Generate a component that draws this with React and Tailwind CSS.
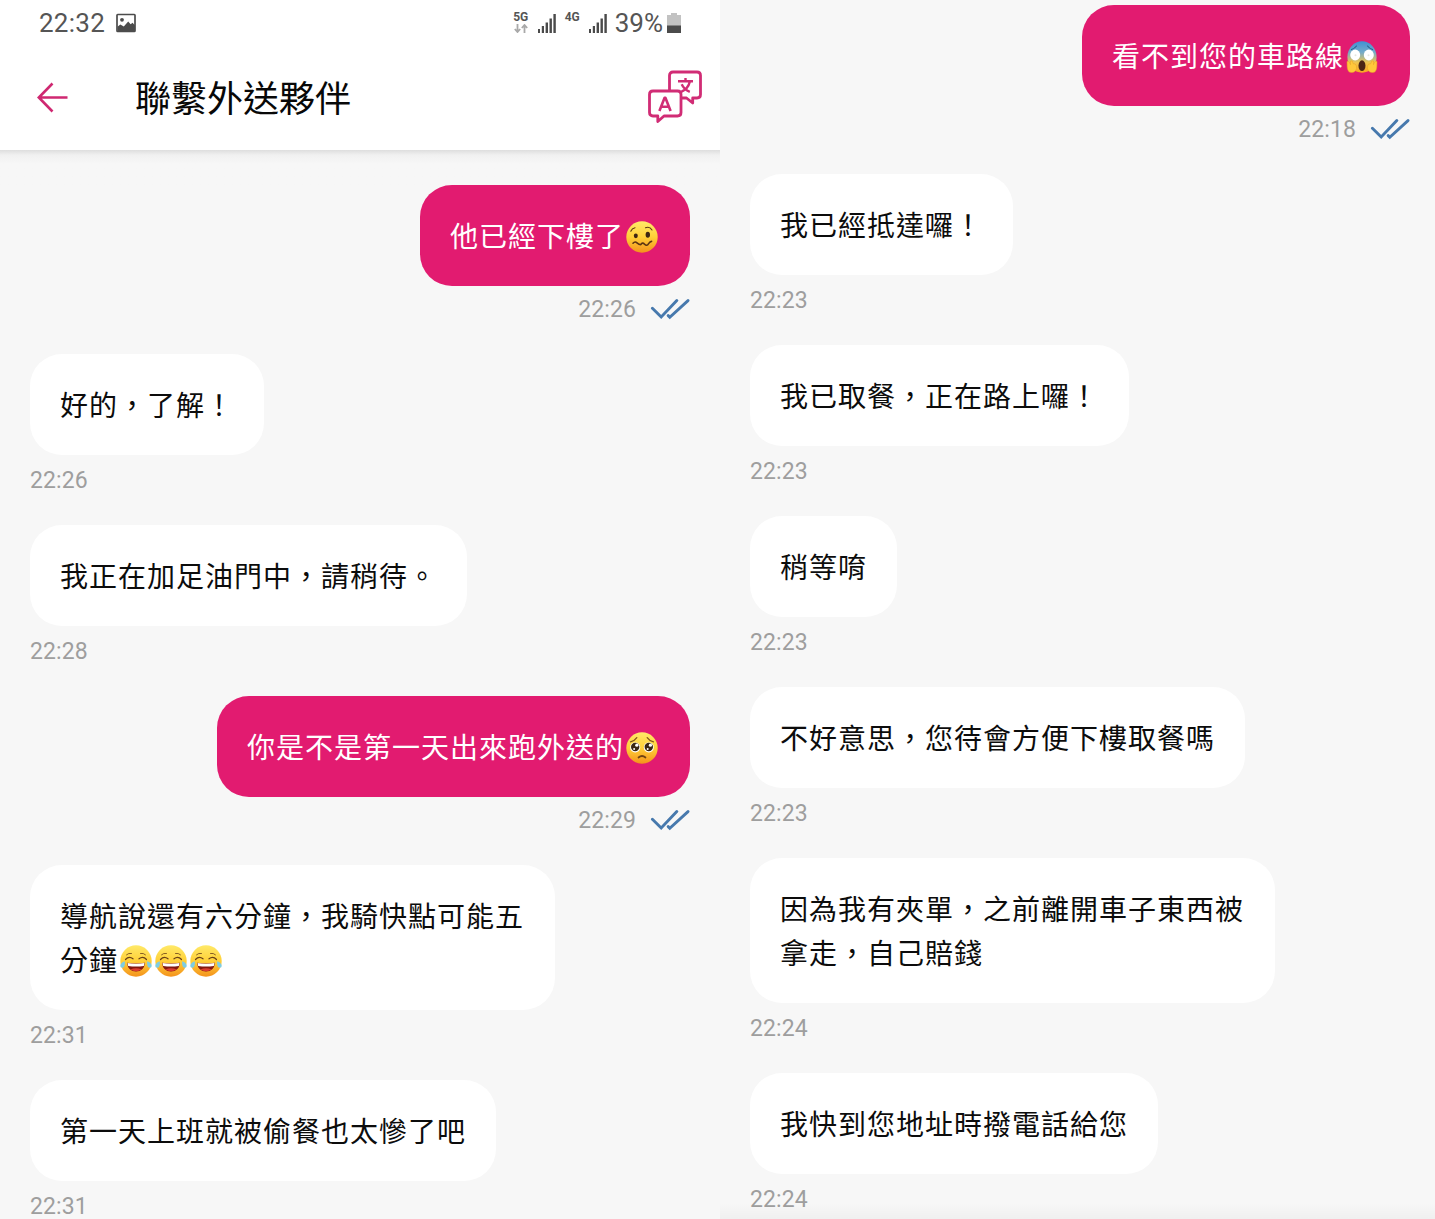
import React from "react";

const CJK = "font-['Roboto','Noto_Sans_CJK_TC',sans-serif]";

function Face({ label, children }) {
  return (
    <svg viewBox="0 0 32 32" role="img" aria-label={label} className="mx-[1.5px] inline-block h-8 w-8 shrink-0">
      <defs>
        <linearGradient id="face" x1="0" y1="0" x2="0" y2="1">
          <stop offset="0" stopColor="#ffe968" />
          <stop offset="0.5" stopColor="#ffd038" />
          <stop offset="1" stopColor="#f4921c" />
        </linearGradient>
        <linearGradient id="fear" x1="0" y1="0" x2="0" y2="1">
          <stop offset="0" stopColor="#3f91d4" />
          <stop offset="0.35" stopColor="#74abc9" />
          <stop offset="0.68" stopColor="#f1c64f" />
          <stop offset="1" stopColor="#f9a51e" />
        </linearGradient>
      </defs>
      {children}
    </svg>
  );
}

function Woozy() {
  return (
    <Face label="🥴">
      <circle cx="16" cy="16" r="15.7" fill="url(#face)" />
      <g fill="none" stroke="#5b3413" strokeLinecap="round" strokeLinejoin="round">
        <path d="M4.8 10.2Q6 7.2 9 6.7M19.5 6.8Q23.5 5 26 9" strokeWidth="1.1" />
        <path d="M7 22.2Q9 20 11 21.8T14.8 23.6Q16.4 20.8 18.6 23.2T22.6 22.6Q24 20.5 25.6 20.4" strokeWidth="1.6" />
      </g>
      <ellipse cx="9.8" cy="14.8" rx="2" ry="2.4" fill="#3d2612" />
      <ellipse cx="21.8" cy="13.8" rx="2.2" ry="3" fill="#3d2612" />
    </Face>
  );
}

function Pleading() {
  return (
    <Face label="🥺">
      <circle cx="16" cy="16" r="15.7" fill="url(#face)" />
      <path d="M4.5 9.8Q8.5 9 10.8 5.6M27.5 9.8Q23.5 9 21.2 5.6" fill="none" stroke="#81521a" strokeWidth="1.2" strokeLinecap="round" />
      <g fill="#fff"><circle cx="9.2" cy="15.4" r="5" /><circle cx="22.8" cy="15.4" r="5" /></g>
      <g fill="#392713"><circle cx="9.2" cy="15" r="4.2" /><circle cx="22.8" cy="15" r="4.2" /></g>
      <g fill="#fff"><circle cx="10.8" cy="13.2" r="1.6" /><circle cx="24.4" cy="13.2" r="1.6" /><circle cx="8.1" cy="17.1" r="1" /><circle cx="21.7" cy="17.1" r="1" /></g>
      <path d="M12.5 25.5Q16 22.5 19.5 25.5" fill="none" stroke="#704213" strokeWidth="1.7" strokeLinecap="round" />
    </Face>
  );
}

function Joy() {
  return (
    <Face label="😂">
      <circle cx="16" cy="16" r="15.7" fill="url(#face)" />
      <g fill="none" stroke="#694018" strokeWidth="1.2" strokeLinecap="round">
        <path d="M6.5 9.8Q8.5 7.8 11.5 8.4M20.5 8.4Q23.5 7.8 25.5 9.8" strokeWidth="0.8" />
        <path d="M5.5 14.5Q9 10.5 13 13.8M19 13.8Q23 10.5 26.5 14.5" />
      </g>
      <path d="M7 17.8Q16 19.2 25 17.8Q24 26.5 16 26.5Q8 26.5 7 17.8Z" fill="#83180f" />
      <path d="M7.5 18.1Q16 19.5 24.5 18.1L23.8 20.9Q16 22 8.2 20.9Z" fill="#fff" />
      <path d="M10.4 24.6Q16 21.8 21.6 24.6Q16 28 10.4 24.6Z" fill="#dc3c30" />
      <g fill="#7dcde4"><path d="M4.8 16.2Q5.4 22.8 2.2 22.8Q-.8 22 .9 19Q2.2 17 4.8 16.2Z" /><path d="M27.2 16.2Q26.6 22.8 29.8 22.8Q32.8 22 31.1 19Q29.8 17 27.2 16.2Z" /></g>
    </Face>
  );
}

function Scream() {
  return (
    <Face label="😱">
      <ellipse cx="16" cy="16" rx="14.6" ry="15.7" fill="url(#fear)" />
      <path d="M5.5 8.5Q8.5 7.5 10.5 5M26.5 8.5Q23.5 7.5 21.5 5" stroke="#25608f" strokeWidth="1.1" fill="none" strokeLinecap="round" />
      <g fill="#fff"><ellipse cx="9.2" cy="14" rx="5" ry="5.4" /><ellipse cx="22.8" cy="14" rx="5" ry="5.4" /></g>
      <g fill="#e5e6e0"><circle cx="9.5" cy="14.3" r="1" /><circle cx="22.5" cy="14.3" r="1" /></g>
      <ellipse cx="16" cy="24.7" rx="3.5" ry="5.4" fill="#4c2615" />
      <g fill="#ffc83b" stroke="#e9a127" strokeWidth="0.5" strokeLinejoin="round">
        <path d="M1 20.5Q2.5 19.3 3.8 22L4.5 23.7V20Q6.5 18.5 7.3 22.8L9.2 23Q11 24.5 10.5 27.5Q9.5 31.6 5.5 31.5Q1.5 31.5 1.2 26Z" />
        <path d="M31 20.5Q29.5 19.3 28.2 22L27.5 23.7V20Q25.5 18.5 24.7 22.8L22.8 23Q21 24.5 21.5 27.5Q22.5 31.6 26.5 31.5Q30.5 31.5 30.8 26Z" />
      </g>
    </Face>
  );
}

function Checks() {
  return (
    <svg viewBox="0 0 40 22" className="h-[22px] w-10" fill="none" stroke="#4779ad" strokeWidth="2.9" aria-hidden="true">
      <path d="M2.4 10.2L11.2 19L26.8 2.6M18.2 17.6L19.8 19.2L38 2.6" strokeLinecap="round" />
    </svg>
  );
}

function Message({ sent, time, width, lines, emoji }) {
  return (
    <article className={sent ? "flex flex-col items-end" : "flex flex-col items-start"}>
      <div
        className={`${width} rounded-[32px] px-[30px] pt-[30px] pb-[27px] text-[28px] leading-[44px] tracking-[1px] whitespace-nowrap ${
          sent ? "bg-[#e21b70] text-white" : "bg-white text-[#0c0c0c]"
        }`}
      >
        {lines.map((line, i) => (
          <p key={line} className="flex h-11 items-center">
            <span className="pt-0.5">{line}</span>
            {i === lines.length - 1 && emoji}
          </p>
        ))}
      </div>
      <div className={`flex items-center text-[23px] leading-7 tracking-[0.1px] text-[#9e9e9e] ${sent ? "h-[68px] gap-3.5 pb-[22px]" : "h-[70px] pb-[18px]"}`}>
        <time className={sent ? "pt-0.5" : ""}>{time}</time>
        {sent && <Checks />}
      </div>
    </article>
  );
}

function Signal() {
  return (
    <svg viewBox="0 0 18 20" className="h-5 w-[18px]" fill="#4a4a4a" aria-hidden="true">
      <rect x="0" y="16" width="2" height="4" /><rect x="3.8" y="13" width="2.2" height="7" /><rect x="7.6" y="9.5" width="2.4" height="10.5" /><rect x="11.5" y="5.5" width="2.4" height="14.5" /><rect x="15.4" y="1" width="2.4" height="19" />
    </svg>
  );
}

function StatusBar() {
  return (
    <div className="flex h-[46px] items-center justify-between pr-[39px] pl-[39px] text-[#555555]">
      <div className="flex items-center gap-[11px]">
        <span className="text-[26px] leading-8 tracking-[0.25px]">22:32</span>
        <svg viewBox="0 0 20 20" className="h-5 w-5" aria-label="圖片">
          <rect x="1" y="1.5" width="18" height="17" rx="0.7" fill="white" stroke="#4c4c4c" strokeWidth="1.7" />
          <circle cx="6" cy="6.8" r="1.9" fill="#4c4c4c" />
          <path d="M1.5 13.8L4.3 11.5L7.8 13.5L12.2 8.6L14.6 11.2L16.6 9.8L19 12.5V18.5H1.5Z" fill="#4c4c4c" />
        </svg>
      </div>
      <div className="flex items-center">
        <div className="flex w-4 flex-col items-center gap-px pb-0.5">
          <span className="text-[12px] leading-[11px] font-bold">5G</span>
          <svg viewBox="0 0 14 9" className="h-[9px] w-3.5" fill="none" stroke="#a9a9a9" strokeWidth="1.8"><path d="M3.5 0V8M.8 5L3.5 8L6.2 5M10.5 9V1M7.8 4L10.5 1L13.2 4" /></svg>
        </div>
        <div className="ml-[9px] pb-px"><Signal /></div>
        <span className="mb-3 ml-[9px] w-4 text-[12px] leading-[11px] font-bold">4G</span>
        <div className="ml-2 pb-px"><Signal /></div>
        <span className="ml-2 text-[26px] leading-8">39%</span>
        <svg viewBox="0 0 14 20" className="ml-1 h-5 w-3.5" aria-hidden="true">
          <path d="M4 0H10V2H14V13H0V2H4Z" fill="#c2c2c2" /><path d="M0 12.5H14V20H0Z" fill="#4b4b4b" />
        </svg>
      </div>
    </div>
  );
}

function TranslateIcon() {
  return (
    <svg viewBox="0 0 54 54" className="mb-0.5 h-[54px] w-[54px]" fill="none" stroke="#d12c75" strokeWidth="2.8" strokeLinejoin="round" aria-label="翻譯">
      <path d="M21.5 20V5.5Q21.5 2 25 2H49Q52.5 2 52.5 5.5V24.5Q52.5 28 49 28H44.7V33L38.5 28H33" />
      <path d="M5 21H29.5Q33 21 33 24.5V42.5Q33 46 29.5 46H16L9.8 51.5V46H5Q1.5 46 1.5 42.5V24.5Q1.5 21 5 21Z" />
      <path d="M11.4 41L16.6 27.8H17.4L22.6 41M13.2 36.8H20.8" strokeWidth="2.6" />
      <path d="M30 11.2H45M37.5 8V11M41.8 11.8Q40.2 18.8 33.2 21.8M33.7 14.2Q36.2 19.7 41.8 21.8" strokeWidth="2.4" />
    </svg>
  );
}

const leftMessages = [
  { sent: true, time: "22:26", width: "w-[270px]", lines: ["他已經下樓了"], emoji: <Woozy /> },
  { time: "22:26", width: "w-[234px]", lines: ["好的，了解！"] },
  { time: "22:28", width: "w-[437px]", lines: ["我正在加足油門中，請稍待。"] },
  { sent: true, time: "22:29", width: "w-[473px]", lines: ["你是不是第一天出來跑外送的"], emoji: <Pleading /> },
  { time: "22:31", width: "w-[525px]", lines: ["導航說還有六分鐘，我騎快點可能五", "分鐘"], emoji: <><Joy /><Joy /><Joy /></> },
  { time: "22:31", width: "w-[466px]", lines: ["第一天上班就被偷餐也太慘了吧"] },
];

const rightMessages = [
  { sent: true, time: "22:18", width: "w-[328px]", lines: ["看不到您的車路線"], emoji: <Scream /> },
  { time: "22:23", width: "w-[263px]", lines: ["我已經抵達囉！"] },
  { time: "22:23", width: "w-[379px]", lines: ["我已取餐，正在路上囉！"] },
  { time: "22:23", width: "w-[147px]", lines: ["稍等唷"] },
  { time: "22:23", width: "w-[495px]", lines: ["不好意思，您待會方便下樓取餐嗎"] },
  { time: "22:24", width: "w-[525px]", lines: ["因為我有夾單，之前離開車子東西被", "拿走，自己賠錢"] },
  { time: "22:24", width: "w-[408px]", lines: ["我快到您地址時撥電話給您"] },
];

export default function App() {
  return (
    <main lang="zh-Hant" className={`${CJK} flex h-[1219px] w-[1435px] overflow-hidden bg-[#f7f7f7]`}>
      <section className="flex w-[720px] shrink-0 flex-col">
        <header className="h-[150px] shrink-0 bg-white">
          <StatusBar />
          <div className="flex h-[104px] items-center pr-[18px] pl-[37px]">
            <svg viewBox="0 0 32 32" className="h-8 w-8" fill="none" stroke="#cf2871" strokeWidth="2.6" aria-label="返回"><path d="M30.5 15.5H2M15.5 1.5L1.8 15.5L15.5 29.5" /></svg>
            <h1 className="ml-[66px] flex-1 pt-1 text-[36px] leading-[52px] text-[#080808]">聯繫外送夥伴</h1>
            <TranslateIcon />
          </div>
        </header>
        <div className="h-[35px] shrink-0 bg-linear-to-b from-[#dedede] via-[#f1f1f1] via-15% to-[#f7f7f7] to-40%" />
        <div className="px-[30px]">
          {leftMessages.map((m, i) => <Message key={i} {...m} />)}
        </div>
      </section>
      <section className="flex w-[715px] shrink-0 flex-col pt-[5px]">
        <div className="h-[1198px] shrink-0 pr-[25px] pl-[30px]">
          {rightMessages.map((m, i) => <Message key={i} {...m} />)}
        </div>
        <div className="h-4 shrink-0 bg-linear-to-b from-transparent to-black/3" />
      </section>
    </main>
  );
}
